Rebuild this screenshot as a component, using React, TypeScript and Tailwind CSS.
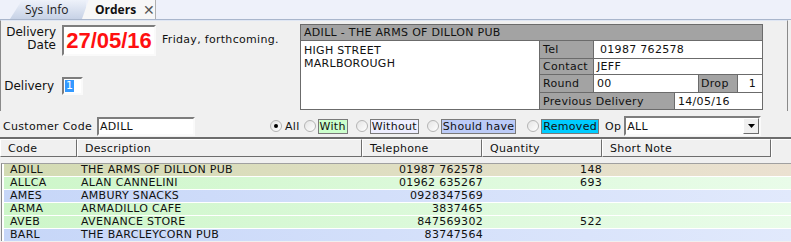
import React from "react";

// row colour schemes of the orders grid
const rowBg: Record<string, string> = {
  current: "bg-linear-to-r from-[#d3dbb3] to-[#ebe1d1]",
  green: "bg-linear-to-r from-[#cdf6c9] to-[#e9fce9]",
  blue: "bg-linear-to-r from-[#c6d6f8] to-[#e1e9fc]",
};

const rows = [
  { code: "ADILL", desc: "THE ARMS OF DILLON PUB", tel: "01987 762578", qty: "148", kind: "current" },
  { code: "ALLCA", desc: "ALAN CANNELINI", tel: "01962 635267", qty: "693", kind: "green" },
  { code: "AMES", desc: "AMBURY SNACKS", tel: "0928347569", qty: "", kind: "blue" },
  { code: "ARMA", desc: "ARMADILLO CAFE", tel: "3837465", qty: "", kind: "green" },
  { code: "AVEB", desc: "AVENANCE STORE", tel: "847569302", qty: "522", kind: "green" },
  { code: "BARL", desc: "THE BARCLEYCORN PUB", tel: "83747564", qty: "", kind: "blue" },
];

const sunken =
  "border-2 border-t-[#7d7d7d] border-l-[#7d7d7d] border-r-[#fafafa] border-b-[#fafafa] bg-white";

const Radio = ({ checked = false }: { checked?: boolean }) => (
  <span className="w-[12px] h-[12px] rounded-full border border-[#b4b4b4] bg-linear-to-br from-[#e4e4e4] to-white flex items-center justify-center shrink-0">
    {checked && <span className="w-[4px] h-[4px] rounded-full bg-black" />}
  </span>
);

const HeaderCell = ({ w, label }: { w: string; label: string }) => (
  <div
    className={`${w} h-[18px] border border-t-white border-l-white border-r-[#6d6d6d] border-b-[#6d6d6d] pl-[7px] flex items-center shrink-0`}
  >
    {label}
  </div>
);

export default function App() {
  return (
    <div className="w-[791px] h-[242px] overflow-hidden bg-[#f0f0f0] text-[11px] leading-[13px] tracking-[0.3px] text-[#111] font-['DejaVu_Sans',Verdana,sans-serif]">
      {/* tab strip */}
      <div className="h-[20px] bg-[#eef1fa] border-b border-[#a9b6cc] flex items-end pl-[10px] tracking-normal">
        <div className="w-[76px] h-[19px] bg-linear-to-b from-[#eef2fa] to-[#c7d2e6] [clip-path:polygon(0_100%,12px_0,100%_0,100%_100%)] flex items-center pl-[15px] text-[12px] font-['Open_Sans',sans-serif] text-[#1a1a1a]">
          Sys Info
        </div>
        <div className="-ml-[4px] w-[74px] h-[20px] bg-[#f7f7f7] border-r border-[#b0b0b0] [clip-path:polygon(0_100%,7px_0,100%_0,100%_100%)] flex items-center pl-[13px] gap-[7px] text-[12px] font-bold font-['Open_Sans',sans-serif] text-[#111]">
          Orders
          <span className="font-normal text-[14px] text-[#555]">✕</span>
        </div>
      </div>

      {/* delivery + customer panel */}
      <div className="h-[91px] border-l border-r border-[#8a8a8a] mr-[3px] border-t border-t-[#dfe6f3] flex">
        <div className="w-[299px] shrink-0 flex flex-col">
          <div className="flex items-start mt-[4px]">
            <div className="w-[55px] text-right pt-[1px] leading-[13px] text-[12px] tracking-normal">
              <div>Delivery</div>
              <div>Date</div>
            </div>
            <div className={`${sunken} ml-[6px] w-[94px] h-[31px] flex items-center justify-center text-[22px] font-bold text-[#ff1010] tracking-normal font-['Liberation_Sans',Arial,sans-serif]`}>
              27/05/16
            </div>
            <div className="ml-[6px] mt-[8px]">Friday, forthcoming.</div>
          </div>
          <div className="flex items-center mt-[21px]">
            <div className="w-[53px] text-right text-[12px] tracking-normal">Delivery</div>
            <div className={`${sunken} ml-[8px] w-[21px] h-[18px] flex items-center pl-[1px]`}>
              <span className="bg-[#3399ff] text-white leading-[12px] px-[1px]">1</span>
            </div>
          </div>
        </div>

        {/* customer card */}
        <div className="mt-[3px] w-[463px] h-[86px] border border-[#6b6b6b] flex flex-col">
          <div className="h-[16px] bg-[#a3a3a3] border-b border-[#6b6b6b] pl-[3px] flex items-center">
            ADILL - THE ARMS OF DILLON PUB
          </div>
          <div className="flex flex-1">
            <div className="w-[239px] bg-white border-r border-[#6b6b6b] pl-[3px] pt-[3px] leading-[13px]">
              <div>HIGH STREET</div>
              <div>MARLBOROUGH</div>
            </div>
            <div className="flex-1 flex flex-col">
              <div className="flex h-[18px] border-b border-[#6b6b6b]">
                <div className="w-[54px] bg-[#a3a3a3] border-r border-[#6b6b6b] pl-[3px] flex items-center">Tel</div>
                <div className="flex-1 bg-white pl-[6px] flex items-center">01987 762578</div>
              </div>
              <div className="flex h-[16px] border-b border-[#6b6b6b]">
                <div className="w-[54px] bg-[#a3a3a3] border-r border-[#6b6b6b] pl-[3px] flex items-center">Contact</div>
                <div className="flex-1 bg-white pl-[3px] flex items-center">JEFF</div>
              </div>
              <div className="flex h-[18px] border-b border-[#6b6b6b]">
                <div className="w-[54px] bg-[#a3a3a3] border-r border-[#6b6b6b] pl-[3px] flex items-center">Round</div>
                <div className="w-[105px] bg-white border-r border-[#6b6b6b] pl-[3px] flex items-center">00</div>
                <div className="w-[39px] bg-[#a3a3a3] border-r border-[#6b6b6b] pl-[2px] flex items-center">Drop</div>
                <div className="flex-1 bg-white pr-[6px] flex items-center justify-end">1</div>
              </div>
              <div className="flex flex-1">
                <div className="w-[135px] bg-[#a3a3a3] border-r border-[#6b6b6b] pl-[3px] flex items-center">Previous Delivery</div>
                <div className="flex-1 bg-white pl-[3px] flex items-center">14/05/16</div>
              </div>
            </div>
          </div>
        </div>
      </div>

      {/* filter row */}
      <div className="h-[26px] flex items-center pl-[3px] pt-[4px]">
        <span>Customer Code</span>
        <div className={`${sunken} ml-[5px] w-[98px] h-[19px] flex items-center pl-[1px]`}>ADILL</div>
        <div className="ml-[75px] flex items-center">
          <Radio checked />
          <span className="ml-[3px]">All</span>
          <span className="ml-[4px]"><Radio /></span>
          <span className="ml-[2px] h-[15px] px-[1px] bg-[#ccffcc] border border-[#7a7a7a] flex items-center">With</span>
          <span className="ml-[8px]"><Radio /></span>
          <span className="ml-[2px] h-[15px] px-[1px] bg-[#eeeeff] border border-[#7a7a7a] flex items-center">Without</span>
          <span className="ml-[8px]"><Radio /></span>
          <span className="ml-[2px] h-[15px] px-[1px] bg-[#bccbf7] border border-[#7a7a7a] flex items-center">Should have</span>
          <span className="ml-[11px]"><Radio /></span>
          <span className="ml-[2px] h-[15px] px-[1px] bg-[#00ccff] border border-[#7a7a7a] flex items-center">Removed</span>
          <span className="ml-[6px]">Op</span>
          <div className={`${sunken} ml-[3px] w-[137px] h-[20px] flex items-center pl-[1px] justify-between`}>
            <span>ALL</span>
            <span className="w-[16px] h-[16px] bg-[#f0f0f0] border border-t-white border-l-white border-r-[#6d6d6d] border-b-[#6d6d6d] flex items-center justify-center">
              <svg width="7" height="4" viewBox="0 0 7 4"><path d="M0 0h7L3.5 4z" fill="#000" /></svg>
            </span>
          </div>
        </div>
      </div>

      {/* grid header */}
      <div className="border-t-2 border-[#6d6d6d] flex">
        <HeaderCell w="w-[77px]" label="Code" />
        <HeaderCell w="w-[285px]" label="Description" />
        <HeaderCell w="w-[120px]" label="Telephone" />
        <HeaderCell w="w-[120px]" label="Quantity" />
        <HeaderCell w="w-[169px]" label="Short Note" />
        <div className="flex-1 h-[18px] border-t border-l border-white" />
      </div>

      {/* grid rows */}
      <div className="mt-[6px] ml-[1px] pl-[2px] border-l border-t border-[#a0a0a0] border-l-[#8a8a8a] bg-white flex flex-col gap-[1px]">
        {rows.map((r) => (
          <div key={r.code} className={`${rowBg[r.kind]} h-[12px] flex items-center leading-[12px]`}>
            <div className="w-[77px] pl-[6px] shrink-0">{r.code}</div>
            <div className="w-[285px] shrink-0">{r.desc}</div>
            <div className="w-[117px] text-right shrink-0">{r.tel}</div>
            <div className="w-[119px] text-right shrink-0">{r.qty}</div>
          </div>
        ))}
      </div>
    </div>
  );
}
